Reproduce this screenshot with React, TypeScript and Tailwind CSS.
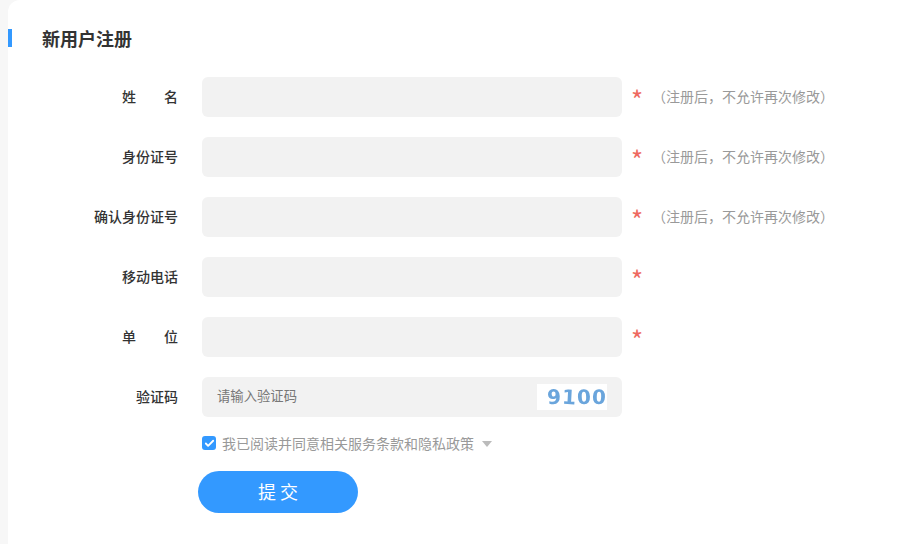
import { Check } from 'lucide-react';

const cjk = "font-['Noto_Sans_CJK_SC','Liberation_Sans',sans-serif]";

interface Field {
  readonly label: string;
  readonly spread?: boolean;
  readonly hint?: boolean;
}

const fields: readonly Field[] = [
  { label: '姓名', spread: true, hint: true },
  { label: '身份证号', hint: true },
  { label: '确认身份证号', hint: true },
  { label: '移动电话' },
  { label: '单位', spread: true },
];

function Label({ text, spread }: { readonly text: string; readonly spread?: boolean }) {
  return (
    <div className="flex w-[178px] shrink-0 justify-end pb-0.5">
      <label
        className={`flex text-[14px] font-medium text-[#333] ${spread ? 'w-14 justify-between' : ''}`}
      >
        {spread ? [...text].map((c) => <span key={c}>{c}</span>) : text}
      </label>
    </div>
  );
}

function FieldRow({ field }: { readonly field: Field }) {
  return (
    <div className="flex h-10 items-center">
      <Label text={field.label} spread={field.spread} />
      <input className="ml-6 h-10 w-[420px] rounded-md bg-[#f2f2f2] px-4 outline-none" />
      <span className="ml-[9px] w-[21px] pt-[3px] text-[26px] leading-none text-[#ee6a5f]">*</span>
      {field.hint && (
        <span className="pb-0.5 text-[14px] text-[#999]">（注册后，不允许再次修改）</span>
      )}
    </div>
  );
}

export default function App() {
  return (
    <div className={`h-[544px] w-[903px] overflow-hidden bg-[#f7f7f7] pl-2 ${cjk}`}>
      <div className="h-full rounded-tl-xl bg-white">
        <div className="flex h-[77px] items-start pt-[29px]">
          <div className="h-[18px] w-1 bg-[#3399ff]" />
          <h1 className="ml-[30px] -mt-px text-[18px] leading-[20px] font-bold text-[#333]">
            新用户注册
          </h1>
        </div>
        <div className="-ml-2 flex flex-col gap-5">
          {fields.map((f) => (
            <FieldRow key={f.label} field={f} />
          ))}
          <div className="flex h-10 items-center">
            <Label text="验证码" />
            <div className="ml-6 flex h-10 w-[420px] items-center justify-between rounded-md bg-[#f2f2f2] px-[15px]">
              <span className="pb-0.5 text-[13.33px] text-[#777]">请输入验证码</span>
              <span className="flex h-[26px] w-[70px] items-center justify-end gap-[1px] bg-white pr-[1px] font-['DejaVu_Sans',sans-serif] text-[20px] leading-none font-bold text-[#6aa5dc] blur-[0.6px]">
                <span className="-rotate-3">9</span>
                <span className="rotate-3">1</span>
                <span className="-rotate-2">0</span>
                <span className="rotate-2">0</span>
              </span>
            </div>
          </div>
        </div>
        <div className="-ml-2 mt-[19px] flex h-[14px] items-center pl-[202px]">
          <span className="flex size-[14px] items-center justify-center rounded-[3px] bg-[#3399ff]">
            <Check className="size-[11px] text-white" strokeWidth={4} />
          </span>
          <span className="ml-[6px] text-[14px] text-[#999]">我已阅读并同意相关服务条款和隐私政策</span>
          <span className="mt-[2px] ml-2 size-0 border-x-[5px] border-t-[6px] border-x-transparent border-t-[#bbb]" />
        </div>
        <div className="-ml-2 mt-[21px] pl-[198px]">
          <button
            type="button"
            className="h-[42px] w-40 rounded-full bg-[#3399ff] pb-0.5 pl-1 text-[18px] tracking-[4px] text-white"
          >
            提交
          </button>
        </div>
      </div>
    </div>
  );
}
